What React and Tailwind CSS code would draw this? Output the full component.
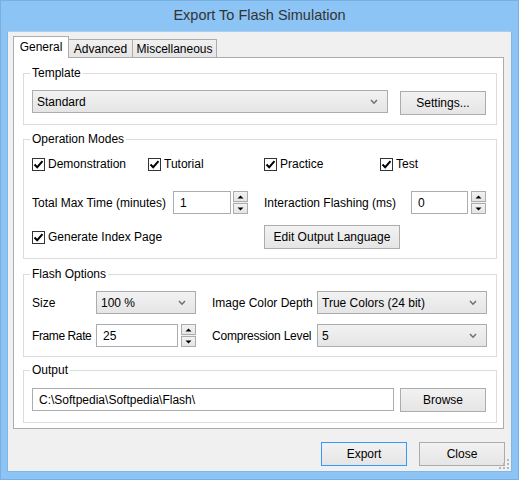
import React from 'react';

const font = { fontFamily: '"Liberation Sans", Arial, sans-serif' };

function Check({ label }) {
  return (
    <div className="flex items-center gap-[3px] h-[16px]">
      <div className="w-[13px] h-[13px] border border-[#333333] bg-white flex items-center justify-center">
        <svg width="11" height="11" viewBox="0 0 11 11">
          <path d="M1.5 5.5 L4.2 8.2 L9.5 2.2" fill="none" stroke="#000" strokeWidth="2" />
        </svg>
      </div>
      <span>{label}</span>
    </div>
  );
}

function Chevron() {
  return (
    <svg width="8" height="6" viewBox="0 0 8 6">
      <path d="M1 1 L4 4.2 L7 1" fill="none" stroke="#707070" strokeWidth="1.5" />
    </svg>
  );
}

function Combo({ value, className = '' }) {
  return (
    <div
      className={`h-[23px] border border-[#acacac] bg-gradient-to-b from-[#f2f2f2] to-[#e5e5e5] flex items-center justify-between pl-[4px] pr-[9px] ${className}`}
    >
      <span>{value}</span>
      <Chevron />
    </div>
  );
}

function Btn({ children, className = '', focused = false }) {
  return (
    <div
      className={`h-[24px] border ${focused ? 'border-[#3399ff]' : 'border-[#acacac]'} bg-gradient-to-b from-[#f2f2f2] to-[#e5e5e5] flex items-center justify-center ${className}`}
    >
      {children}
    </div>
  );
}

function TextBox({ value, className = '' }) {
  return (
    <div className={`h-[23px] border border-[#abadb3] bg-white flex items-center pl-[6px] ${className}`}>
      {value}
    </div>
  );
}

function Spin() {
  return (
    <div className="w-[15px] h-[23px] flex flex-col justify-between bg-[#f0f0f0]">
      <div className="h-[11px] border border-[#acacac] bg-gradient-to-b from-[#f2f2f2] to-[#e5e5e5] flex items-center justify-center">
        <svg width="7" height="4" viewBox="0 0 7 4">
          <path d="M0.5 3.5 L3.5 0.5 L6.5 3.5 Z" fill="#000" />
        </svg>
      </div>
      <div className="h-[11px] border border-[#acacac] bg-gradient-to-b from-[#f2f2f2] to-[#e5e5e5] flex items-center justify-center">
        <svg width="7" height="4" viewBox="0 0 7 4">
          <path d="M0.5 0.5 L3.5 3.5 L6.5 0.5 Z" fill="#000" />
        </svg>
      </div>
    </div>
  );
}

function Group({ title, className = '', children }) {
  return (
    <fieldset className={`border border-[#dcdcdc] px-[8px] pb-[9px] ${className}`}>
      <legend className="-ml-[2px] px-[2px] leading-[16px]">{title}</legend>
      {children}
    </fieldset>
  );
}

export default function App() {
  return (
    <div
      className="w-[519px] h-[480px] bg-[#8cc4f5] border border-[#79b0e3] flex flex-col text-[12px] text-black overflow-hidden"
      style={font}
    >
      {/* Title bar */}
      <div className="h-[30px] flex items-center justify-center text-[14.5px] text-[#333333]">
        Export To Flash Simulation
      </div>

      {/* Client area */}
      <div className="ml-[6px] mr-[6px] h-[441px] bg-[#f0f0f0] border border-[#80b6e8] border-t-[#a9cdef] pt-[4px] pl-[5px] pr-[7px] flex flex-col relative">
        {/* Tabs */}
        <div className="flex items-end h-[21px]">
          <div className="relative z-10 -mb-px w-[56px] h-[22px] bg-white border border-b-0 border-[#acacac] flex items-center justify-center pb-[2px]">
            General
          </div>
          <div className="w-[64px] h-[18px] border border-l-0 border-b-0 border-[#acacac] bg-gradient-to-b from-[#f0f0f0] to-[#e5e5e5] flex items-center justify-center">
            Advanced
          </div>
          <div className="w-[84px] h-[18px] border border-l-0 border-b-0 border-[#acacac] bg-gradient-to-b from-[#f0f0f0] to-[#e5e5e5] flex items-center justify-center">
            Miscellaneous
          </div>
        </div>

        {/* Tab panel */}
        <div className="h-[372px] bg-white border border-[#acacac] pt-[7px] pl-[9px] pr-[6px] pb-[6px] flex flex-col">
          <Group title="Template">
            <div className="pt-[9px] flex items-start gap-[12px]">
              <Combo value="Standard" className="w-[356px]" />
              <Btn className="w-[86px] mt-[1px]">Settings...</Btn>
            </div>
          </Group>

          <Group title="Operation Modes" className="mt-[6px]">
            <div className="pt-[9px]">
              <div className="grid grid-cols-[116px_116px_116px_1fr] h-[16px]">
                <Check label="Demonstration" />
                <Check label="Tutorial" />
                <Check label="Practice" />
                <Check label="Test" />
              </div>
              <div className="grid grid-cols-[232px_1fr] mt-[19px]">
                <div className="flex items-center">
                  <span className="w-[141px]">Total Max Time (minutes)</span>
                  <TextBox value="1" className="w-[58px]" />
                  <div className="ml-[2px]">
                    <Spin />
                  </div>
                </div>
                <div className="flex items-center">
                  <span className="w-[147px]">Interaction Flashing (ms)</span>
                  <TextBox value="0" className="w-[57px]" />
                  <div className="ml-[3px]">
                    <Spin />
                  </div>
                </div>
              </div>
              <div className="grid grid-cols-[232px_1fr] mt-[11px]">
                <div className="flex items-center">
                  <Check label="Generate Index Page" />
                </div>
                <Btn className="w-[136px] h-[23px]">Edit Output Language</Btn>
              </div>
            </div>
          </Group>

          <Group title="Flash Options" className="mt-[7px]">
            <div className="pt-[9px] grid grid-cols-[64px_100px_16px_105px_170px] items-center">
              <span>Size</span>
              <Combo value="100 %" />
              <span />
              <span>Image Color Depth</span>
              <Combo value="True Colors (24 bit)" />
            </div>
            <div className="mt-[10px] grid grid-cols-[64px_100px_16px_105px_170px] items-center">
              <span className="tracking-[-0.4px]">Frame Rate</span>
              <div className="flex items-center">
                <TextBox value="25" className="w-[83px]" />
                <div className="ml-[3px]">
                  <Spin />
                </div>
              </div>
              <span />
              <span className="tracking-[-0.2px]">Compression Level</span>
              <Combo value="5" />
            </div>
          </Group>

          <Group title="Output" className="mt-[5px] pb-[10px]">
            <div className="pt-[10px] flex items-start gap-[6px]">
              <TextBox value="C:\Softpedia\Softpedia\Flash\" className="w-[362px] pl-[5px]" />
              <Btn className="w-[86px]">Browse</Btn>
            </div>
          </Group>
        </div>

        {/* Bottom buttons */}
        <div className="mt-[13px] flex justify-end gap-[12px] -mr-px">
          <Btn focused className="w-[86px]">Export</Btn>
          <Btn className="w-[86px]">Close</Btn>
        </div>

        {/* Size grip */}
        <svg className="absolute right-[1px] bottom-[1px]" width="11" height="11" viewBox="0 0 11 11">
          <rect x="8" y="0" width="2" height="2" fill="#b8b8b8" />
          <rect x="4" y="4" width="2" height="2" fill="#b8b8b8" />
          <rect x="8" y="4" width="2" height="2" fill="#b8b8b8" />
          <rect x="0" y="8" width="2" height="2" fill="#b8b8b8" />
          <rect x="4" y="8" width="2" height="2" fill="#b8b8b8" />
          <rect x="8" y="8" width="2" height="2" fill="#b8b8b8" />
        </svg>
      </div>
    </div>
  );
}
